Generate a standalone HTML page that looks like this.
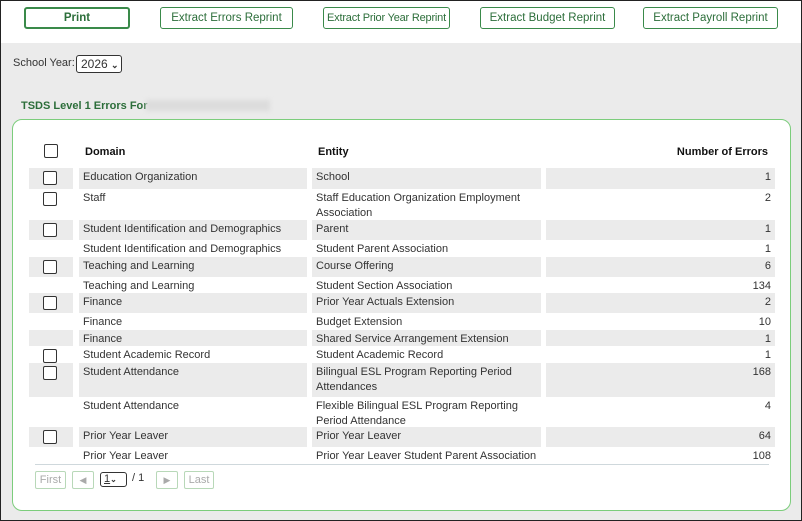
<!DOCTYPE html>
<html><head><style>
*{margin:0;padding:0;box-sizing:border-box}
body{width:802px;height:521px;overflow:hidden;font-family:"Liberation Sans",sans-serif;font-size:11px;color:#333;position:relative;background:#ebebeb}
.frame{position:absolute;left:0;top:0;width:802px;height:521px;border:1px solid #222;z-index:10;pointer-events:none}
.top{position:absolute;left:0;top:0;width:802px;height:43px;background:#fff}
.btn{position:absolute;top:7px;height:22px;border:1px solid #3a8a4a;border-radius:3px;background:#fff;color:#2c6e3a;font-size:11.5px;text-align:center;line-height:20px;white-space:nowrap;overflow:hidden}
.a{position:absolute;white-space:nowrap}
.panel{position:absolute;left:12px;top:119px;width:779px;height:392px;background:#fff;border:1px solid #7ccd7c;border-radius:10px}
.cb{position:absolute;width:14px;height:14px;border:1px solid #333;border-radius:2px;background:#fff}
.sh{position:absolute;background:#ebebeb}
.t{position:absolute;line-height:15px;color:#333}
.pb{position:absolute;top:471px;height:18px;border:1px solid #b8d8b8;border-radius:2px;color:#aaa;font-size:11px;line-height:16px;text-align:center;background:#fff}
</style></head><body>
<div class="top"></div>
<div class="btn" style="left:24px;width:106px;border-width:2px;font-weight:bold;line-height:18px">Print</div>
<div class="btn" style="left:160px;width:133px">Extract Errors Reprint</div>
<div class="btn" style="left:323px;width:127px;font-size:11px;letter-spacing:-0.2px">Extract Prior Year Reprint</div>
<div class="btn" style="left:480px;width:135px">Extract Budget Reprint</div>
<div class="btn" style="left:643px;width:135px">Extract Payroll Reprint</div>
<div class="a" style="left:13px;top:57px">School Year:</div>
<div class="a" style="left:76px;top:55px;width:46px;height:18px;border:1px solid #333;border-radius:3px;background:#fff;font-size:12px;line-height:16px;padding-left:4px">2026 <span style="font-size:9px;font-weight:bold">&#x2304;</span></div>
<div class="a" style="left:21px;top:100px;color:#2c6e3a;font-weight:bold;font-size:11px">TSDS Level 1 Errors For</div>
<div class="a" style="left:146px;top:100px;width:124px;height:11px;background:#dcdcdc;filter:blur(2px)"></div>
<div class="panel"></div>
<div class="cb" style="left:44px;top:144px"></div>
<div class="a" style="left:85px;top:146px;font-weight:bold;color:#111">Domain</div>
<div class="a" style="left:318px;top:146px;font-weight:bold;color:#111">Entity</div>
<div class="a" style="left:600px;width:168px;text-align:right;top:146px;font-weight:bold;color:#111">Number of Errors</div>
<div id="rows"></div>
<div class="a" style="left:35px;top:464px;width:734px;height:1px;background:#cfd8dc"></div>
<div class="pb" style="left:35px;width:31px">First</div>
<div class="pb" style="left:72px;width:22px;font-size:9px">&#9664;</div>
<div class="a" style="left:100px;top:472px;width:27px;height:15px;border:1px solid #333;border-radius:3px;font-size:11px;line-height:13px;padding-left:3px;background:#fff"><u>1</u><span style="font-size:8px;font-weight:bold">&#x2304;</span></div>
<div class="a" style="left:132px;top:472px">/ 1</div>
<div class="pb" style="left:156px;width:22px;font-size:9px">&#9654;</div>
<div class="pb" style="left:184px;width:30px">Last</div>
<script>
var R=[[168,21,1,1,"Education Organization","School","1"],
[189,31,0,1,"Staff","Staff Education Organization Employment<br>Association","2"],
[220,20,1,1,"Student Identification and Demographics","Parent","1"],
[240,17,0,0,"Student Identification and Demographics","Student Parent Association","1"],
[257,20,1,1,"Teaching and Learning","Course Offering","6"],
[277,16,0,0,"Teaching and Learning","Student Section Association","134"],
[293,20,1,1,"Finance","Prior Year Actuals Extension","2"],
[313,17,0,0,"Finance","Budget Extension","10"],
[330,16,1,0,"Finance","Shared Service Arrangement Extension","1"],
[346,17,0,1,"Student Academic Record","Student Academic Record","1"],
[363,34,1,1,"Student Attendance","Bilingual ESL Program Reporting Period<br>Attendances","168"],
[397,30,0,0,"Student Attendance","Flexible Bilingual ESL Program Reporting<br>Period Attendance","4"],
[427,20,1,1,"Prior Year Leaver","Prior Year Leaver","64"],
[447,16,0,0,"Prior Year Leaver","Prior Year Leaver Student Parent Association","108"]];
var h="";R.forEach(function(r){var y=r[0],H=r[1];
if(r[2]){h+='<div class="sh" style="left:29px;top:'+y+'px;width:44px;height:'+H+'px"></div><div class="sh" style="left:79px;top:'+y+'px;width:228px;height:'+H+'px"></div><div class="sh" style="left:312px;top:'+y+'px;width:229px;height:'+H+'px"></div><div class="sh" style="left:546px;top:'+y+'px;width:229px;height:'+H+'px"></div>';}
if(r[3])h+='<div class="cb" style="left:43px;top:'+(y+3)+'px"></div>';
h+='<div class="t" style="left:83px;top:'+(y+2)+'px">'+r[4]+'</div><div class="t" style="left:316px;top:'+(y+2)+'px">'+r[5]+'</div><div class="t" style="left:600px;width:171px;text-align:right;top:'+(y+2)+'px">'+r[6]+'</div>';});
document.getElementById("rows").innerHTML=h;
</script>
<div class="frame"></div>
</body></html>
